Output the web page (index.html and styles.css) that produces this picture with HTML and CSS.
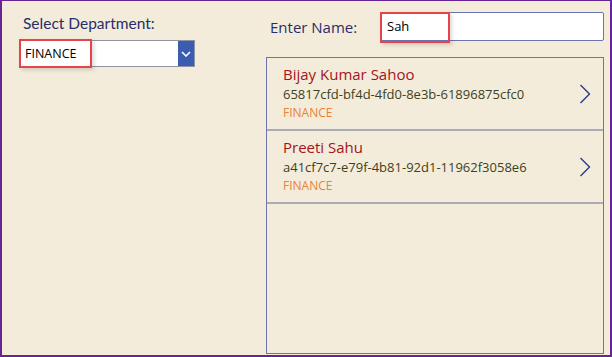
FILE: index.html
```html
<!DOCTYPE html>
<html lang="en">
<head>
  <meta charset="UTF-8">
  <title>Employee Search</title>
  <link rel="stylesheet" href="styles.css">
</head>
<body>
  <div class="screen">
    <div class="left-col">
      <label class="field-label dept-label">Select Department:</label>
      <div class="dropdown">
        <span class="dropdown-value">FINANCE</span>
        <span class="dropdown-btn">
          <svg width="10" height="6" viewBox="0 0 10 6"><path d="M1 1 L5 5 L9 1" fill="none" stroke="#fff" stroke-width="1.6"/></svg>
        </span>
        <span class="highlight dept-highlight"></span>
      </div>
    </div>
    <div class="right-col">
      <div class="search-row">
        <label class="field-label name-label">Enter Name:</label>
        <div class="search-box">
          <span class="search-value">Sah</span>
          <span class="highlight name-highlight"></span>
        </div>
      </div>
      <div class="gallery">
        <div class="item">
          <div class="item-text">
            <div class="item-name">Bijay Kumar Sahoo</div>
            <div class="item-id">65817cfd-bf4d-4fd0-8e3b-61896875cfc0</div>
            <div class="item-dept">FINANCE</div>
          </div>
          <svg class="chevron" width="12" height="20" viewBox="0 0 12 20"><path d="M1.5 1 L10.5 10 L1.5 19" fill="none" stroke="#2b3a8f" stroke-width="1.4"/></svg>
        </div>
        <div class="item">
          <div class="item-text">
            <div class="item-name">Preeti Sahu</div>
            <div class="item-id">a41cf7c7-e79f-4b81-92d1-11962f3058e6</div>
            <div class="item-dept">FINANCE</div>
          </div>
          <svg class="chevron" width="12" height="20" viewBox="0 0 12 20"><path d="M1.5 1 L10.5 10 L1.5 19" fill="none" stroke="#2b3a8f" stroke-width="1.4"/></svg>
        </div>
      </div>
    </div>
  </div>
</body>
</html>
```

FILE: styles.css
```css
html, body {
  margin: 0;
  padding: 0;
}
body {
  width: 612px;
  height: 357px;
  box-sizing: border-box;
  background: #f3ecda;
  border: 2px solid #6a2395;
  border-top-width: 1px;
  font-family: "Open Sans", "Noto Sans", sans-serif;
  overflow: hidden;
}
.screen {
  display: flex;
  padding-left: 17px;
}
.left-col {
  width: 176px;
  padding-top: 12px;
}
.field-label {
  display: block;
  color: #2a2d6c;
  line-height: 20px;
}
.dept-label {
  padding-left: 4px;
  margin-bottom: 7px;
  font-family: Lato, "Open Sans", sans-serif;
  font-size: 15.5px;
  white-space: nowrap;
}
.name-label {
  font-size: 15px;
  flex: 1;
}
.dropdown {
  position: relative;
  display: flex;
  height: 27px;
  box-sizing: border-box;
  background: #fff;
  border: 1px solid #8f93a8;
}
.dropdown-value {
  flex: 1;
  padding-left: 5px;
  font-size: 12.5px;
  line-height: 25px;
  color: #000;
}
.dropdown-btn {
  width: 16px;
  background: #3a5db0;
  display: flex;
  align-items: center;
  justify-content: center;
}
.highlight {
  position: absolute;
  border: 2px solid #e8424a;
  box-shadow: 2px 2px 4px rgba(0, 0, 0, 0.15);
  pointer-events: none;
}
.dept-highlight {
  left: -1px;
  top: -2px;
  width: 69px;
  height: 25px;
}
.right-col {
  margin-left: 71px;
  width: 338px;
  padding-top: 11px;
}
.search-row {
  display: flex;
  align-items: center;
  height: 29px;
  padding-left: 4px;
}
.search-box {
  position: relative;
  width: 224px;
  height: 29px;
  box-sizing: border-box;
  background: #fff;
  border: 1px solid #6b73b0;
  border-radius: 2px;
}
.search-value {
  display: block;
  padding-left: 6px;
  font-size: 13px;
  line-height: 27px;
  color: #000;
}
.name-highlight {
  left: -1px;
  top: -1px;
  width: 66px;
  height: 27px;
}
.gallery {
  margin-top: 16px;
  height: 297px;
  box-sizing: border-box;
  border: 1px solid #6b73b0;
}
.item {
  display: flex;
  align-items: center;
  height: 73px;
  box-sizing: border-box;
  border-bottom: 2px solid #a9abb6;
  padding-left: 16px;
  padding-right: 12px;
}
.item-text {
  flex: 1;
  align-self: flex-start;
  padding-top: 6px;
}
.item-name {
  color: #a3141c;
  font-size: 15px;
  line-height: 20px;
}
.item-id {
  color: #3f3f22;
  font-size: 13px;
  line-height: 20px;
}
.item-dept {
  color: #ea8236;
  font-size: 12px;
  line-height: 17px;
}
```
